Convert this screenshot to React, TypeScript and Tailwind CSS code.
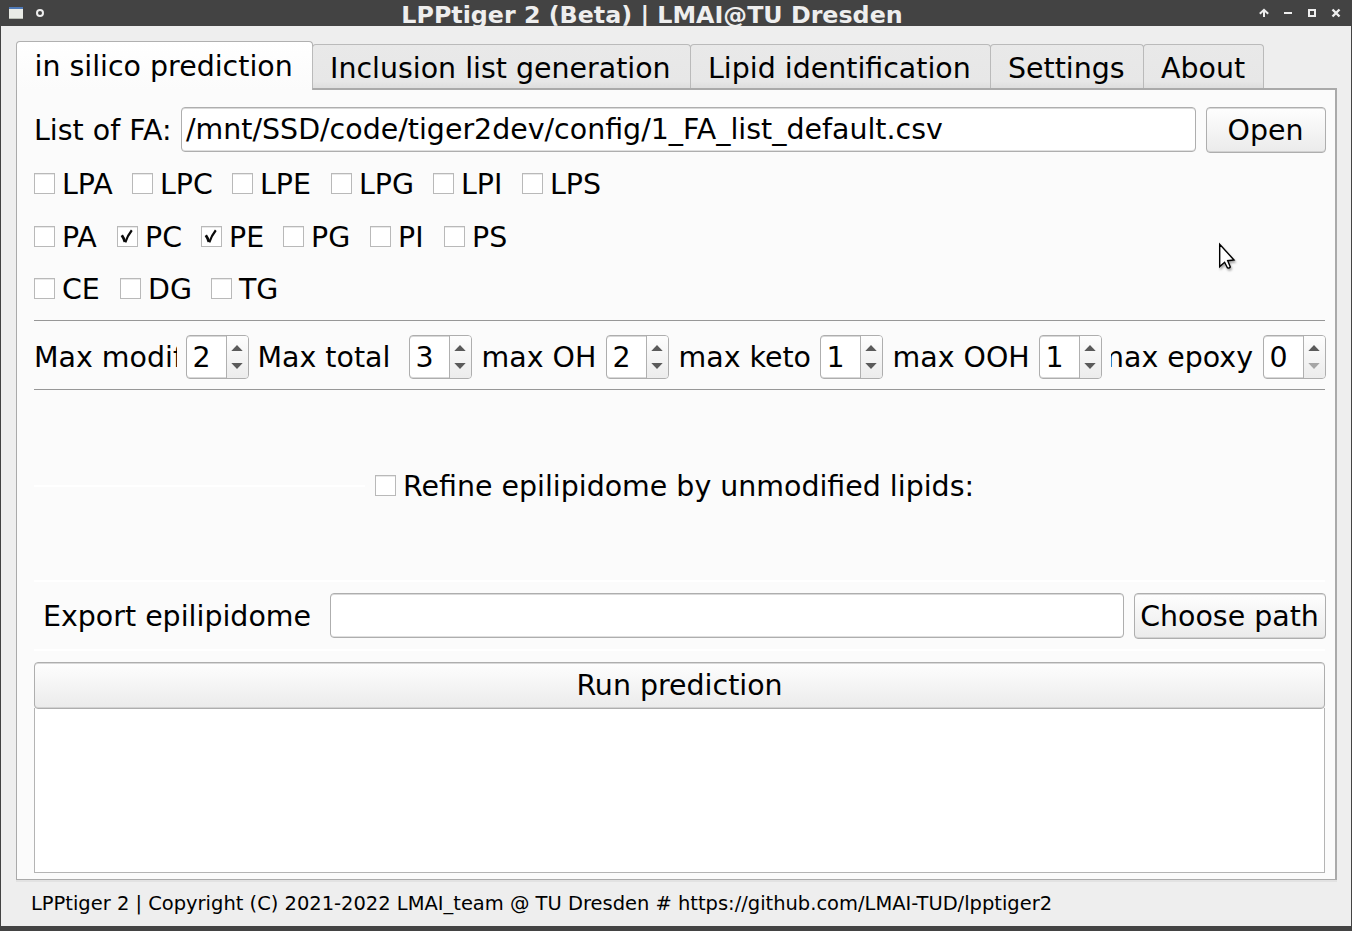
import React from "react";

type CheckItem = { label: string; checked?: boolean; width: string };

const lysoLipids: CheckItem[] = [
  { label: "LPA", width: "w-[98px]" },
  { label: "LPC", width: "w-[100px]" },
  { label: "LPE", width: "w-[99px]" },
  { label: "LPG", width: "w-[102px]" },
  { label: "LPI", width: "w-[89px]" },
  { label: "LPS", width: "w-[90px]" },
];

const phospholipids: CheckItem[] = [
  { label: "PA", width: "w-[83px]" },
  { label: "PC", checked: true, width: "w-[84px]" },
  { label: "PE", checked: true, width: "w-[82px]" },
  { label: "PG", width: "w-[87px]" },
  { label: "PI", width: "w-[74px]" },
  { label: "PS", width: "w-[80px]" },
];

const neutralLipids: CheckItem[] = [
  { label: "CE", width: "w-[86px]" },
  { label: "DG", width: "w-[91px]" },
  { label: "TG", width: "w-[80px]" },
];

function CheckBox({ label, checked }: { label: string; checked?: boolean }) {
  return (
    <label className="flex h-[21px] items-center whitespace-nowrap">
      <span className="flex h-[21px] w-[21px] shrink-0 items-center justify-center border border-[#b9b9b9] bg-white shadow-[inset_0_1px_0_#e9e9e9]">
        {checked && (
          <svg width="19" height="19" viewBox="0 0 19 19" fill="none" stroke="#0a0a0a">
            <path d="M3.8 8.2 Q5.8 11 6.9 14.8" strokeWidth="2.8" />
            <path d="M7.3 15.4 Q9.6 8.6 13.8 3.3" strokeWidth="2.2" />
          </svg>
        )}
      </span>
      <span className="ml-[7px] pt-[2px]">{label}</span>
    </label>
  );
}

function CheckRow({ items }: { items: CheckItem[] }) {
  return (
    <div className="flex h-[21px]">
      {items.map((item) => (
        <div key={item.label} className={`${item.width} shrink-0`}>
          <CheckBox label={item.label} checked={item.checked} />
        </div>
      ))}
    </div>
  );
}

function Spin({ value, atMin }: { value: number; atMin?: boolean }) {
  return (
    <div className="flex h-[44px] w-[63px] shrink-0 overflow-hidden rounded-[4px] border border-[#aeaeae] bg-white shadow-[inset_0_1px_0_#d8d8d8,inset_0_-1px_0_#d8d8d8]">
      <div className="flex w-[39px] items-center pt-[2px] pl-[5.5px]">{value}</div>
      <div className="flex flex-1 items-center justify-center border-l border-[#b0b0b0] bg-linear-to-b from-[#fdfdfd] to-[#ececec] pr-px">
        <svg width="12" height="26" viewBox="0 0 12 26">
          <path d="M0.3 7 L6 1 L11.7 7 Z" fill="#5a5a5a" />
          <path d="M0.3 19 L6 25 L11.7 19 Z" fill={atMin ? "#a5a5a5" : "#5a5a5a"} />
        </svg>
      </div>
    </div>
  );
}

function PushButton({ children, className }: { children: React.ReactNode; className: string }) {
  return (
    <button
      className={`flex shrink-0 items-center justify-center rounded-[4px] border border-[#aeaeae] bg-linear-to-b from-[#fefefe] to-[#ebebeb] whitespace-nowrap shadow-[inset_0_1px_0_#d9d9d9,inset_0_-1px_0_#d2d2d2] ${className}`}
    >
      {children}
    </button>
  );
}

function Tab({ label, className }: { label: string; className: string }) {
  return (
    <div
      className={`mt-[3px] flex h-[44px] shrink-0 items-center rounded-t-[4px] border border-b-0 border-[#bababa] bg-linear-to-b from-[#e9e9e9] via-[#e7e7e7] via-85% to-[#dedede] pt-[5px] pl-[17px] whitespace-nowrap ${className}`}
    >
      {label}
    </div>
  );
}

function TitleBar() {
  return (
    <header className="flex h-[26px] shrink-0 items-center overflow-hidden bg-[#434343] pr-[11px] pl-[9px]">
      <svg width="50" height="26" viewBox="0 0 50 26" className="shrink-0">
        <rect x="0" y="7" width="14" height="12" fill="#e9ebe6" />
        <rect x="0" y="7" width="14" height="2" fill="#4f7ab8" />
        <rect x="0" y="18" width="14" height="1" fill="#b9bdb4" />
        <circle cx="31" cy="13" r="3" fill="none" stroke="#eeeeee" strokeWidth="2" />
      </svg>
      <h1 className="flex h-[26px] flex-1 items-center justify-center pt-[3px] pr-[14px] text-[23.77px] leading-[26px] font-bold whitespace-nowrap text-[#eeeeee]">
        LPPtiger 2 (Beta) | LMAI@TU Dresden
      </h1>
      <svg width="82" height="26" viewBox="0 0 82 26" className="shrink-0" fill="none" stroke="#eeeeee" strokeWidth="2">
        <path d="M5 17 V10 M0.8 13.8 L5 9.8 L9.2 13.8" />
        <path d="M25 13 H33" />
        <rect x="50" y="10" width="6" height="6" />
        <path d="M73.5 9.5 L80.5 16.5 M80.5 9.5 L73.5 16.5" strokeWidth="2.4" />
      </svg>
    </header>
  );
}

export default function App() {
  return (
    <div className="flex h-[931px] w-[1352px] flex-col overflow-hidden bg-[#434343] font-['DejaVu_Sans',sans-serif] text-[28.45px] leading-[34px] text-black">
      <TitleBar />
      <div className="mx-px flex h-[900px] shrink-0 flex-col bg-[#eeeeee] pt-[15px] pr-[14px] pl-[15px]">
        <nav className="relative z-10 flex h-[47px] shrink-0">
          <div className="flex h-[49px] w-[297px] shrink-0 items-center rounded-t-[4px] border border-b-0 border-[#b0b0b0] bg-linear-to-b from-white to-[#fbfbfb] pt-px pl-[17.5px] whitespace-nowrap">
            in silico prediction
          </div>
          <Tab label="Inclusion list generation" className="-ml-px w-[379px]" />
          <Tab label="Lipid identification" className="-ml-px w-[301px]" />
          <Tab label="Settings" className="-ml-px w-[154px]" />
          <Tab label="About" className="-ml-px w-[121px]" />
        </nav>
        <main className="flex h-[792px] shrink-0 flex-col border-t-2 border-r-2 border-b border-l border-[#aaaaaa] bg-[#fbfbfb] pt-[17px] pr-[9px] pl-[17px] shadow-[0_2px_0_#e2e2e2]">
          <div className="flex h-[47px] shrink-0 items-start">
            <div className="flex h-[46px] w-[147px] shrink-0 items-center pt-[2px] whitespace-nowrap">List of FA:</div>
            <div className="mr-px flex h-[45px] w-[1015px] shrink-0 items-center rounded-[4px] border border-[#aeaeae] bg-white pl-[4px] whitespace-nowrap shadow-[inset_0_1px_0_#d9d9d9,inset_0_-1px_0_#e0e0e0]">
              /mnt/SSD/code/tiger2dev/config/1_FA_list_default.csv
            </div>
            <PushButton className="ml-[9px] h-[46px] w-[120px] pt-[2px] pr-px">Open</PushButton>
          </div>

          <div className="mt-[19px] flex h-[126px] shrink-0 flex-col">
            <CheckRow items={lysoLipids} />
            <div className="mt-[32px] mb-[31px]">
              <CheckRow items={phospholipids} />
            </div>
            <CheckRow items={neutralLipids} />
          </div>

          <div className="mt-[21px] mr-px h-px shrink-0 bg-[#979797]" />

          <div className="mt-[14px] flex h-[44px] shrink-0 items-center whitespace-nowrap">
            <div className="w-[143px] shrink-0 overflow-hidden pt-[2px]">Max modif</div>
            <div className="w-[9px] shrink-0" />
            <Spin value={2} />
            <div className="w-[160px] shrink-0 pt-[2px] pl-[8.5px]">Max total</div>
            <Spin value={3} />
            <div className="w-[134px] shrink-0 pt-[2px] pl-[9.5px]">max OH</div>
            <Spin value={2} />
            <div className="w-[151px] shrink-0 pt-[2px] pl-[9.5px]">max keto</div>
            <Spin value={1} />
            <div className="w-[156px] shrink-0 pt-[2px] pl-[9.5px]">max OOH</div>
            <Spin value={1} />
            <div className="ml-[9px] flex w-[142px] shrink-0 justify-end overflow-hidden pt-[2px]">max epoxy</div>
            <div className="w-[10px] shrink-0" />
            <Spin value={0} atMin />
          </div>

          <div className="mt-[10px] mr-px h-px shrink-0 bg-[#979797]" />

          <div className="flex h-[190px] shrink-0 items-center pt-px">
            <div className="mr-[10px] h-[2px] w-[331px] shrink-0 bg-white" />
            <CheckBox label="Refine epilipidome by unmodified lipids:" />
          </div>

          <div className="mr-px h-[2px] shrink-0 bg-white" />

          <div className="mt-[11px] flex h-[47px] shrink-0 items-start">
            <div className="flex h-[46px] w-[296px] shrink-0 items-center pt-[2px] pl-[9px] whitespace-nowrap">Export epilipidome</div>
            <div className="mr-px h-[45px] w-[794px] shrink-0 rounded-[4px] border border-[#aeaeae] bg-white shadow-[inset_0_1px_0_#d9d9d9,inset_0_-1px_0_#e0e0e0]" />
            <PushButton className="ml-[9px] h-[46px] w-[192px] pt-[2px] pr-px">Choose path</PushButton>
          </div>

          <div className="mt-[9px] mr-px h-[2px] shrink-0 bg-white" />

          <PushButton className="relative mt-[11px] h-[47px] w-[1291px]">Run prediction</PushButton>
          <div className="-mt-px mr-px h-[165px] shrink-0 border border-t-0 border-[#b4b4b4] bg-white" />
        </main>
        <footer className="flex h-[45px] shrink-0 items-center pt-[2px] pl-[15px] text-[19.48px] leading-[24px] whitespace-nowrap">
          LPPtiger 2 | Copyright (C) 2021-2022 LMAI_team @ TU Dresden # https://github.com/LMAI-TUD/lpptiger2
        </footer>
      </div>

      <svg
        className="absolute top-[242px] left-[1217px] drop-shadow-[1px_2px_1px_rgba(0,0,0,0.35)]"
        width="20"
        height="30"
        viewBox="0 0 20 30"
      >
        <path
          d="M2.7 2.2 V24.6 L7.6 20.3 L10.4 25.7 Q12 26.8 13.3 25 L10.7 18.7 L17 18 Z"
          fill="white"
          stroke="black"
          strokeWidth="1.4"
        />
      </svg>
    </div>
  );
}
